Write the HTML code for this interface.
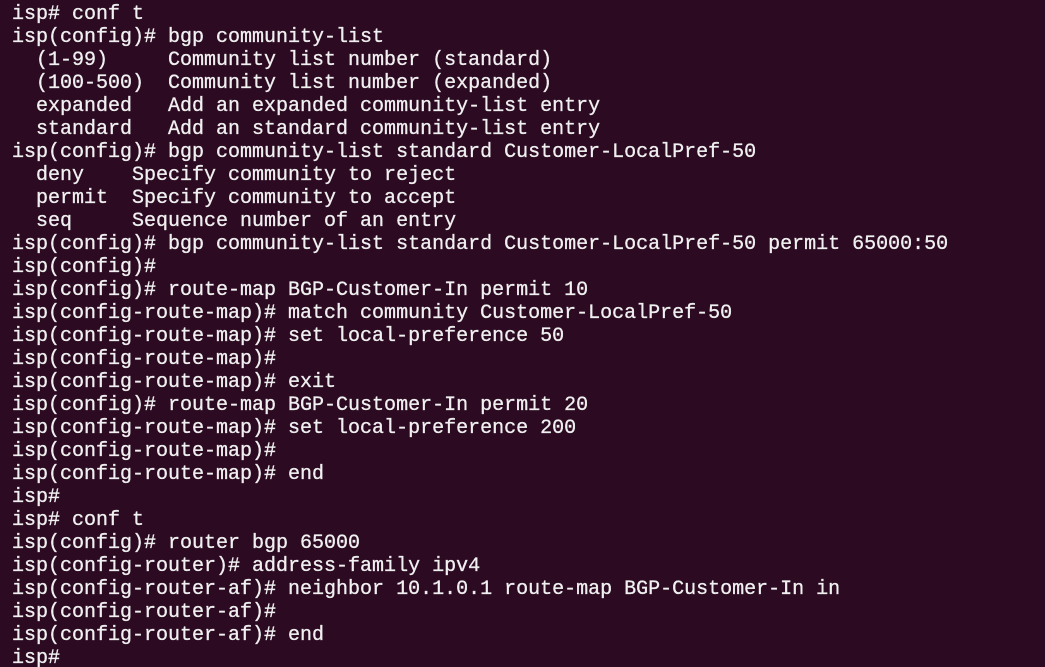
<!DOCTYPE html>
<html><head><meta charset="utf-8"><style>
html,body{margin:0;padding:0;background:#2c0a22;width:1045px;height:667px;overflow:hidden}
pre{margin:0;padding:3px 0 0 12px;font-family:"Liberation Mono",monospace;font-size:20px;line-height:23px;color:#f0f0f0;white-space:pre;-webkit-text-stroke:0.3px #f0f0f0}
</style></head><body><pre>isp# conf t
isp(config)# bgp community-list
  (1-99)     Community list number (standard)
  (100-500)  Community list number (expanded)
  expanded   Add an expanded community-list entry
  standard   Add an standard community-list entry
isp(config)# bgp community-list standard Customer-LocalPref-50
  deny    Specify community to reject
  permit  Specify community to accept
  seq     Sequence number of an entry
isp(config)# bgp community-list standard Customer-LocalPref-50 permit 65000:50
isp(config)#
isp(config)# route-map BGP-Customer-In permit 10
isp(config-route-map)# match community Customer-LocalPref-50
isp(config-route-map)# set local-preference 50
isp(config-route-map)#
isp(config-route-map)# exit
isp(config)# route-map BGP-Customer-In permit 20
isp(config-route-map)# set local-preference 200
isp(config-route-map)#
isp(config-route-map)# end
isp#
isp# conf t
isp(config)# router bgp 65000
isp(config-router)# address-family ipv4
isp(config-router-af)# neighbor 10.1.0.1 route-map BGP-Customer-In in
isp(config-router-af)#
isp(config-router-af)# end
isp#</pre></body></html>
